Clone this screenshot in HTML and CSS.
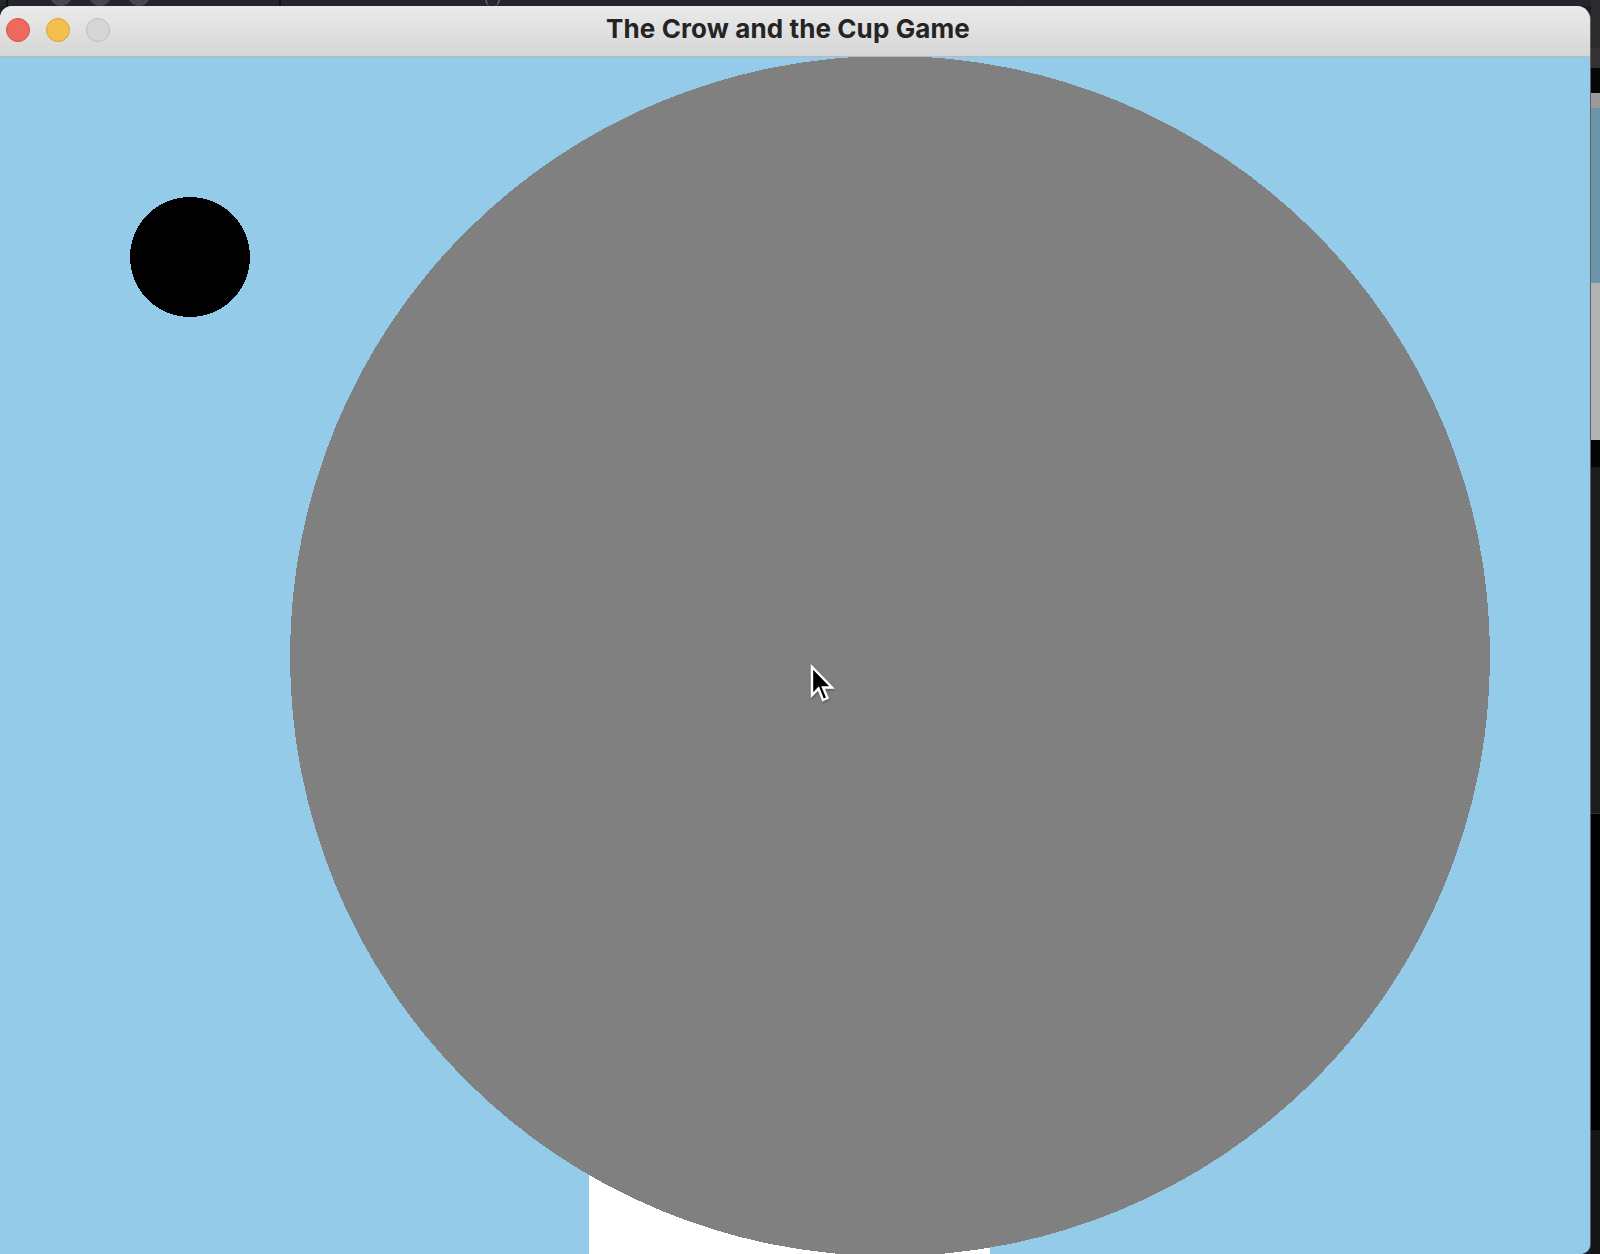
FILE: index.html
```html
<!DOCTYPE html>
<html lang="en">
<head>
<meta charset="utf-8">
<title>The Crow and the Cup Game</title>
<link rel="stylesheet" href="styles.css">
</head>
<body>
<div class="screen">
  <div class="main">
    <div class="topstrip">
      <span class="bar-line first"></span>
      <span class="tab-dot"></span>
      <span class="tab-dot"></span>
      <span class="tab-dot"></span>
      <span class="bar-line second"></span>
      <span class="bar-paren"></span>
    </div>
    <div class="window">
      <div class="titlebar">
        <div class="lights">
          <span class="light red"></span>
          <span class="light yellow"></span>
          <span class="light off"></span>
        </div>
        <div class="title">The Crow and the Cup Game</div>
        <div class="spacer"></div>
      </div>
      <div class="canvas">
        <div class="cup"></div>
        <svg class="pebble" width="1200" height="1200" viewBox="0 0 1200 1200" shape-rendering="crispEdges">
          <circle cx="600" cy="600" r="600" fill="#808080"/>
        </svg>
        <svg class="crow" width="120" height="120" viewBox="0 0 120 120" shape-rendering="crispEdges">
          <circle cx="60" cy="60" r="60" fill="#000000"/>
        </svg>
        <svg class="cursor" width="30" height="44" viewBox="0 0 30 44">
          <defs>
            <filter id="sh" x="-30%" y="-30%" width="160%" height="160%">
              <feDropShadow dx="0.5" dy="1.5" stdDeviation="1.2" flood-color="#000" flood-opacity="0.35"/>
            </filter>
          </defs>
          <polygon filter="url(#sh)" points="3,3 3,31 9.5,24.5 14,36 18.5,34 14,23.5 23,23.5" fill="#000" stroke="#fff" stroke-width="2.4" stroke-linejoin="miter"/>
        </svg>
      </div>
    </div>
  </div>
  <div class="side">
    <div class="seg s1"></div>
    <div class="seg s2"></div>
    <div class="seg s3"></div>
    <div class="seg s4"></div>
    <div class="seg s5"></div>
    <div class="seg s6"></div>
    <div class="seg s7"></div>
    <div class="seg s8"></div>
    <div class="seg s9"></div>
    <div class="seg s10"></div>
  </div>
</div>
</body>
</html>
```
FILE: styles.css
```css
html, body {
  margin: 0;
  padding: 0;
  background: #1c1d20;
}

.screen {
  width: 1600px;
  height: 1254px;
  display: grid;
  grid-template-columns: 1591px 9px;
  overflow: hidden;
  background: #1c1d20;
}

.main {
  display: flex;
  flex-direction: column;
  height: 1254px;
}

.topstrip {
  height: 6px;
  flex: none;
  display: flex;
  align-items: flex-start;
  background: #23262a;
  overflow: hidden;
}

.bar-line {
  width: 2px;
  height: 6px;
  flex: none;
  background: #0f1012;
}
.bar-line.first { margin-left: 6px; }
.bar-line.second { margin-left: 129px; }

.tab-dot {
  width: 22px;
  height: 22px;
  flex: none;
  border-radius: 50%;
  background: #45484d;
  margin-top: -16px;
  margin-left: 17px;
}
.tab-dot:nth-child(2) { margin-left: 42px; }

.bar-paren {
  width: 15px;
  height: 6px;
  flex: none;
  margin-left: 204px;
  border-left: 2px solid #5b5e63;
  border-right: 2px solid #5b5e63;
  box-sizing: border-box;
  border-radius: 0 0 6px 6px;
}

.window {
  flex: 1;
  display: flex;
  flex-direction: column;
  background: #93cbe8;
  border-radius: 12px 14px 10px 0;
  border-right: 1px solid #5e5f61;
  overflow: hidden;
  box-sizing: border-box;
}

.titlebar {
  height: 50px;
  flex: none;
  display: grid;
  grid-template-columns: 1fr auto 1fr;
  align-items: start;
  background: linear-gradient(#eaeaea, #d6d6d6);
  border-bottom: 1px solid #b9b9b9;
}

.lights {
  display: flex;
  gap: 16px;
  padding: 12px 0 0 6px;
}

.light {
  width: 24px;
  height: 24px;
  border-radius: 50%;
  box-sizing: border-box;
}
.light.red { background: #ee6a5e; border: 1px solid #d55247; }
.light.yellow { background: #f5bf4f; border: 1px solid #d9a235; }
.light.off { background: #d6d6d6; border: 1px solid #bdbdbd; }

.title {
  font-family: Inter, "Liberation Sans", sans-serif;
  font-weight: 700;
  font-size: 26px;
  line-height: 46px;
  color: #242424;
  letter-spacing: 0.1px;
  padding-right: 14px;
  white-space: nowrap;
}

.canvas {
  position: relative;
  flex: 1;
  overflow: hidden;
  background: #93cbe8;
}

.cup {
  position: absolute;
  left: 589px;
  top: 1043px;
  width: 401px;
  bottom: 0;
  background: #ffffff;
}

.pebble {
  position: absolute;
  left: 290px;
  top: -1px;
  display: block;
}

.crow {
  position: absolute;
  left: 130px;
  top: 140px;
  display: block;
}

.cursor {
  position: absolute;
  left: 809px;
  top: 607px;
  overflow: visible;
}

.side {
  display: flex;
  flex-direction: column;
  height: 1254px;
}
.seg { flex: none; }
.s1 { height: 48px; background: #2b2b2d; }
.s2 { height: 20px; background: #333335; }
.s3 { height: 25px; background: #070707; }
.s4 { height: 15px; background: #9b9b9b; }
.s5 { height: 175px; background: #6d96ab; }
.s6 { height: 157px; background: #b3b3b3; }
.s7 { height: 27px; background: #050505; }
.s8 { height: 346px; background: #1c1c1e; border-bottom: 1px solid #333; }
.s9 { height: 316px; background: #000000; }
.s10 { flex: 1; background: #151515; }
```
